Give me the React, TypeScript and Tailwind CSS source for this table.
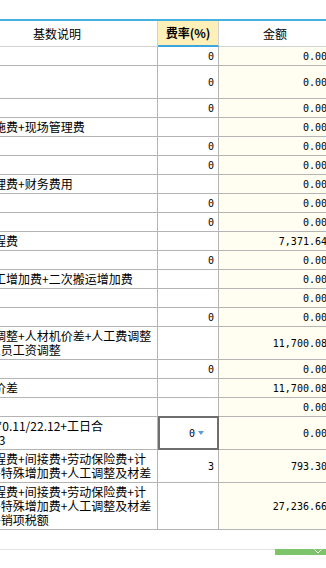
import React from "react";

type Row = {
  h: string;
  text?: string[];
  rate?: string;
  amt: string;
  dropdown?: boolean;
};

const rows: Row[] = [
  { h: "h-[19px]", rate: "0", amt: "0.00" },
  { h: "h-[33px]", rate: "0", amt: "0.00" },
  { h: "h-[19px]", rate: "0", amt: "0.00" },
  { h: "h-[19px]", text: ["其他措施费+现场管理费"], amt: "0.00" },
  { h: "h-[19px]", rate: "0", amt: "0.00" },
  { h: "h-[19px]", rate: "0", amt: "0.00" },
  { h: "h-[19px]", text: ["企业管理费+财务费用"], amt: "0.00" },
  { h: "h-[19px]", rate: "0", amt: "0.00" },
  { h: "h-[19px]", rate: "0", amt: "0.00" },
  { h: "h-[19px]", text: ["直接工程费"], amt: "7,371.64" },
  { h: "h-[19px]", rate: "0", amt: "0.00" },
  { h: "h-[19px]", text: ["夜间施工增加费+二次搬运增加费"], amt: "0.00" },
  { h: "h-[19px]", amt: "0.00" },
  { h: "h-[19px]", rate: "0", amt: "0.00" },
  {
    h: "h-[33px]",
    text: ["人工费调整+人材机价差+人工费调整", "材差+人员工资调整"],
    amt: "11,700.08",
  },
  { h: "h-[19px]", rate: "0", amt: "0.00" },
  { h: "h-[19px]", text: ["人材机价差"], amt: "11,700.08" },
  { h: "h-[19px]", amt: "0.00" },
  {
    h: "h-[33px]",
    text: ["人工费 *0.11/22.12+工日合", "日合计/3"],
    rate: "0",
    dropdown: true,
    amt: "0.00",
  },
  {
    h: "h-[33px]",
    text: ["直接工程费+间接费+劳动保险费+计", "划利润+特殊增加费+人工调整及材差"],
    rate: "3",
    amt: "793.30",
  },
  {
    h: "h-[47px]",
    text: [
      "直接工程费+间接费+劳动保险费+计",
      "划利润+特殊增加费+人工调整及材差",
      "机价差+销项税额",
    ],
    amt: "27,236.66",
  },
];

const cjk = "font-['Noto_Sans_CJK_SC','Noto_Sans',sans-serif]";
const num = "font-['DejaVu_Sans_Mono','Liberation_Mono',monospace] text-[10px]";

export default function App() {
  return (
    <div className={`w-[326px] h-[568px] overflow-hidden bg-white text-black ${cjk}`}>
      <div className="h-[19px]" />
      <div className="-ml-[43px] w-[374px]">
        {/* header */}
        <div className="flex border-t-2 border-t-[#45b0e2]">
          <div className="w-[201px] h-[26px] shrink-0 border-r border-b border-[#d2d2d2] flex items-center justify-center text-[12px]">
            基数说明
          </div>
          <div className="w-[61px] h-[26px] shrink-0 border-r border-r-[#d2d2d2] border-b-2 border-b-[#3aa6dd] bg-[#ffefb8] flex items-center justify-center text-[12px] font-bold">
            费率(%)
          </div>
          <div className="w-[112px] h-[26px] shrink-0 border-b border-[#d2d2d2] flex items-center justify-center text-[12px]">
            金额
          </div>
        </div>
        {/* rows */}
        {rows.map((r, i) => (
          <div key={i} className={`flex ${r.h} border-b border-[#b4b4b4]`}>
            <div className="w-[201px] shrink-0 border-r border-[#b4b4b4] pl-[1px] overflow-hidden flex flex-col justify-center text-[12px] leading-[14px]">
              {(r.text ?? []).map((t, j) => (
                <div key={j} className="whitespace-nowrap">
                  {t}
                </div>
              ))}
            </div>
            <div
              className={`relative w-[61px] shrink-0 border-r border-[#b4b4b4] flex items-center justify-end ${
                r.dropdown ? "pr-[14px]" : "pr-[4px]"
              } ${num}`}
            >
              {r.rate}
              {r.dropdown && (
                <>
                  <svg width="6" height="4" viewBox="0 0 6 4" className="ml-[3px]">
                    <polygon points="0,0 6,0 3,4" fill="#5b9bd6" />
                  </svg>
                  <div className="absolute -top-[1px] left-0 -right-[1px] -bottom-[1px] border-2 border-[#6e6e6e]" />
                </>
              )}
            </div>
            <div className={`w-[112px] shrink-0 bg-[#fffef0] flex items-center justify-end pr-[4px] ${num}`}>
              {r.amt}
            </div>
          </div>
        ))}
      </div>
      <div className="h-[19px]" />
      <div className="flex h-[6px]">
        <div className="flex-1 border-t border-[#e2e2e2]" />
        <div className="w-[51px] bg-[#7cc36a] flex items-start pl-[39px]">
          <svg width="8" height="5" viewBox="0 0 8 5">
            <polyline points="0.5,0.5 4,4 7.5,0.5" fill="none" stroke="#ffffff" strokeWidth="1" />
          </svg>
        </div>
      </div>
    </div>
  );
}
